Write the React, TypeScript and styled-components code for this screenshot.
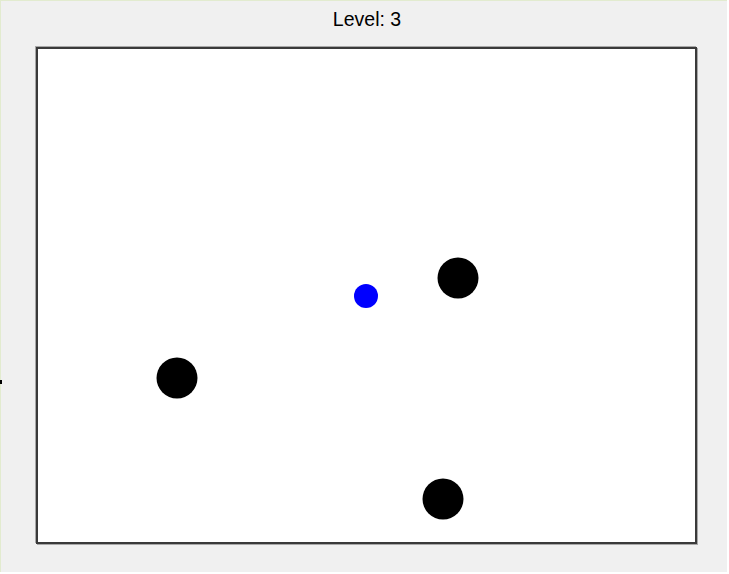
import React from "react";
import styled, { createGlobalStyle } from "styled-components";

const Global = createGlobalStyle`
  html, body { margin: 0; padding: 0; background: #ffffff; }
  body { font-family: "Liberation Sans", Arial, sans-serif; }
`;

const Frame = styled.div`
  position: relative;
  width: 726px;
  height: 571px;
  background: #f0f0f0;
  border-top: 1px solid #e2ebcf;
  border-left: 1px solid #e2ebcf;
  display: flex;
  flex-direction: column;
  align-items: flex-start;
`;

const Title = styled.div`
  align-self: stretch;
  height: 46px;
  box-sizing: border-box;
  padding-top: 7px;
  text-align: center;
  font-size: 19.5px;
  line-height: 23px;
  color: #000;
  padding-left: 6px;
`;

const Board = styled.div`
  margin-left: 35px;
  width: 657px;
  height: 493px;
  background: #ffffff;
  border: 2px solid #3a3a3a;
  box-shadow: -1px -1px 0 #a8a8a8, 1px 1px 0 #a8a8a8;
`;

const Marker = styled.div`
  position: absolute;
  left: -1px;
  top: 379px;
  width: 2px;
  height: 4px;
  background: #000;
`;

type Ball = { x: number; y: number; r: number; color: string };

const balls: Ball[] = [
  { x: 420, y: 229, r: 20.5, color: "#000" },
  { x: 139, y: 329, r: 20.5, color: "#000" },
  { x: 405, y: 450, r: 20.5, color: "#000" },
  { x: 328, y: 247, r: 12, color: "#0000ff" },
];

export default function App() {
  return (
    <>
      <Global />
      <Frame>
        <Title>Level: 3</Title>
        <Board>
          <svg width="657" height="493" style={{ display: "block" }}>
            {balls.map((b, i) => (
              <circle key={i} cx={b.x} cy={b.y} r={b.r} fill={b.color} />
            ))}
          </svg>
        </Board>
        <Marker />
      </Frame>
    </>
  );
}
